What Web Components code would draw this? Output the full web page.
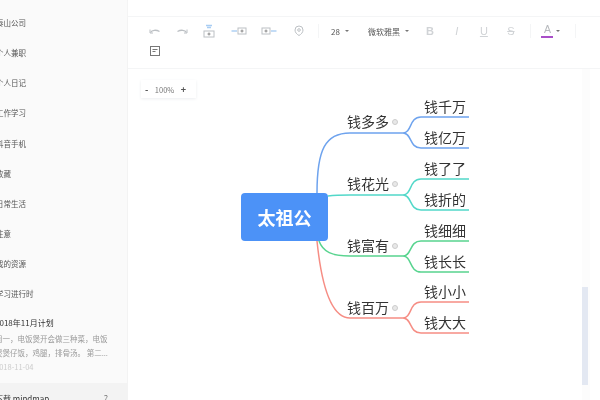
<!DOCTYPE html>
<html lang="zh"><head><meta charset="utf-8"><title>mindmap</title>
<style>
html,body{margin:0;padding:0;width:600px;height:400px;overflow:hidden;background:#fff;font-family:"Microsoft YaHei","Noto Sans CJK SC",sans-serif}
app-shell{width:600px;height:400px}
</style></head><body>
<app-shell>
  <side-bar slot="side">
    <side-row>泰山公司</side-row><side-row>个人兼职</side-row><side-row>个人日记</side-row><side-row>工作学习</side-row><side-row>抖音手机</side-row><side-row>收藏</side-row><side-row>日常生活</side-row><side-row>注意</side-row><side-row>我的资源</side-row><side-row>学习进行时</side-row>
    <note-card title-text="2018年11月计划" date="2018-11-04">周一，电饭煲开会做三种菜，电饭煲煲仔饭，鸡腿，排骨汤。 第二...</note-card>
    <side-foot>下载 mindmap</side-foot>
  </side-bar>
  <edit-toolbar slot="toolbar"></edit-toolbar>
  <mind-canvas slot="canvas"></mind-canvas>
</app-shell>
<script>
const def=(n,css,html)=>{customElements.define(n,class extends HTMLElement{constructor(){super();this.attachShadow({mode:'open'}).innerHTML=`<style>${css}</style>${typeof html==='function'?html(this):html}`;}})};

def('app-shell',`:host{display:grid;grid-template-columns:128px 1fr;grid-template-rows:17px 52px 1fr;overflow:hidden}
 .side{grid-row:1/4;min-width:0;overflow:hidden}
 .top{border-bottom:1px solid #f4f5f6;box-shadow:0 1px 1px #fafafa}
 .tb{min-width:0}.cv{min-width:0;min-height:0}`,
 `<div class="side"><slot name="side"></slot></div><div class="top"></div><div class="tb"><slot name="toolbar"></slot></div><div class="cv"><slot name="canvas"></slot></div>`);

def('side-bar',`:host{display:flex;flex-direction:column;height:400px;box-sizing:border-box;padding-top:8px;background:#fafafa;border-right:1px solid #f3f3f3;overflow:hidden}`,`<slot></slot>`);

def('side-row',`:host{display:block;flex:none;height:30.15px;line-height:30.15px;margin-left:-4px;font-size:7.5px;color:#555;white-space:nowrap;filter:blur(.3px)}`,`<slot></slot>`);

def('note-card',`:host{display:block;flex:none;margin-left:-5px;height:73.5px;width:118px;overflow:hidden;filter:blur(.3px)}
 .t{font-size:8px;line-height:15px;color:#333;height:15px;margin-top:6px;white-space:nowrap}
 .p{font-size:7.5px;line-height:14px;color:#9a9a9a;height:28px;overflow:hidden;margin-top:1.5px}
 .d{font-size:7.5px;line-height:15px;color:#ccc;margin-top:-.5px}`,
 h=>`<div class="t">${h.getAttribute('title-text')}</div><div class="p"><slot></slot></div><div class="d">${h.getAttribute('date')}</div>`);

def('side-foot',`:host{display:flex;flex:1;align-items:flex-start;justify-content:space-between;margin-left:-5px;padding:6px 19px 0 0;background:#f3f3f3;font-size:8px;line-height:20px;color:#333;white-space:nowrap;filter:blur(.3px)}
 span{color:#777;font-size:9px}`,`<div><slot></slot></div><span>?</span>`);

const ic=d=>`<svg width="16" height="16" viewBox="0 0 16 16" fill="none" stroke="#bcc0c4" stroke-width="1">${d}</svg>`;
const icons={
 undo:`<path d="M3.500 9.500c1.500-2.500 5.500-3 9-1" stroke-width="1.300"/><path d="M3 6.500v3.500h3"/>`,
 redo:`<path d="M12.500 9.500c-1.500-2.500-5.500-3-9-1" stroke-width="1.300"/><path d="M13 6.500v3.500h-3"/>`,
 parent:`<path d="M5 2.500h6M6 4.500h4" stroke="#a9cdf3" stroke-width="1.400"/><rect x="3" y="8" width="10" height="6"/><path d="M6.500 11h3M8 9.500v3" stroke="#888"/>`,
 left:`<path d="M0.500 8h5.500" stroke="#a9cdf3" stroke-width="1.400"/><rect x="7" y="5" width="8" height="6"/><path d="M9.500 8h3M11 6.500v3" stroke="#888"/>`,
 right:`<rect x="1" y="5" width="8" height="6"/><path d="M3.500 8h3M5 6.500v3" stroke="#888"/><path d="M10 8h5.500" stroke="#a9cdf3" stroke-width="1.400"/>`,
 pin:`<path d="M8 12.500c-2.200-1.300-4-3-4-5.500a4 4 0 0 1 8 0C12 9.500 10.200 11.200 8 12.500z"/><circle cx="8" cy="7" r="1.300"/>`
};
def('tool-icon',`:host{display:flex;flex:none;height:20px;align-items:center;justify-content:center;filter:blur(.25px)}`,h=>`<style>:host{width:${h.getAttribute('w')||30}px}</style>`+ic(icons[h.getAttribute('name')]));
def('tool-drop',`:host{display:flex;flex:none;align-items:center;gap:5px;height:20px;font-size:8px;color:#555;white-space:nowrap;filter:blur(.25px)}
 i{width:0;height:0;border:2px solid transparent;border-top:2.500px solid #777;border-bottom:0}`,`<slot></slot><i></i>`);
def('tool-fmt',`:host{display:flex;flex:none;width:27px;height:20px;align-items:center;justify-content:center;font:11px "Liberation Sans",sans-serif;color:#d0d3d6;filter:blur(.25px)}`,`<slot></slot>`);

def('edit-toolbar',`:host{display:block;height:52px;box-sizing:border-box;padding:4px 0 0 13.5px;border-bottom:1px solid #f4f5f6;background:#fff}
 .r{display:flex;align-items:center;height:20px}
 .sep{flex:none;width:1px;height:14px;background:#f4f5f6}
 .sp{flex:none}
 .a{display:flex;flex-direction:column;align-items:center;width:16px;filter:blur(.25px)}
 .a b{font:10.500px/11px "Liberation Sans",sans-serif;color:#b5b8bc;height:11px}
 .a u{display:block;width:12px;height:1.500px;background:#a94fc8;margin-top:1px}
 .n{width:27px;height:20px;display:flex;align-items:center;justify-content:center;filter:blur(.25px)}`,
 `<div class="r">
   <tool-icon w="27" name="undo"></tool-icon><tool-icon w="27" name="redo"></tool-icon><tool-icon w="27" name="parent"></tool-icon>
   <div class="sp" style="width:1.500px"></div>
   <tool-icon name="left"></tool-icon><tool-icon name="right"></tool-icon><tool-icon name="pin"></tool-icon>
   <div class="sep" style="margin:0 12px 0 4px"></div>
   <tool-drop>28</tool-drop><div class="sp" style="width:19px"></div>
   <tool-drop>微软雅黑</tool-drop><div class="sp" style="width:7.500px"></div>
   <tool-fmt><b style="font-weight:700">B</b></tool-fmt><tool-fmt><i>I</i></tool-fmt><tool-fmt><u>U</u></tool-fmt><tool-fmt><s>S</s></tool-fmt>
   <div class="sep" style="margin:0 8.500px 0 5.500px"></div>
   <div class="a"><b>A</b><u></u></div>
   <i style="flex:none;margin-left:1px;width:0;height:0;border:2px solid transparent;border-top:2.500px solid #777;border-bottom:0"></i>
   <div class="sep" style="margin-left:15px"></div>
 </div>
 <div class="r"><div class="n"><svg width="16" height="16" viewBox="0 0 16 16" fill="none" stroke="#777"><rect x="3.500" y="3.500" width="9" height="9"/><path d="M5.500 6.500h5M5.500 8.500h3" stroke-width="1.200"/></svg></div></div>`);

def('zoom-box',`:host{display:flex;align-items:center;justify-content:space-between;box-sizing:border-box;width:55px;height:18px;padding:0 10px 0 4px;background:#fff;box-shadow:0 1px 3px #eceef0;font:7.500px "Noto Sans CJK SC","Liberation Sans",sans-serif;color:#777;filter:blur(.25px)}
 b{color:#555;font-size:9px}`,`<b>-</b><span>100%</span><b>+</b>`);

def('map-node',`:host{position:absolute;transform:translateY(calc(-50% - 1px));line-height:20px;font-size:14px;color:#333;white-space:nowrap;display:flex;align-items:center;gap:3px;filter:blur(.25px)}
 i{width:4px;height:4px;border:1.500px solid #ccc;background:#e8e8e8;border-radius:50%;box-sizing:content-box;margin-top:2px}`,
 h=>`<slot></slot>${h.hasAttribute('dot')?'<i></i>':''}`);

const branch=(c,rootPath,y,a,b)=>`<g stroke="${c}"><path d="${rootPath}"/><path d="M403 ${y}C412 ${y} 409 ${a} 421 ${a}H469M403 ${y}C412 ${y} 409 ${b} 421 ${b}H469"/></g>`;
const groups=[
 ['#6ea3ee','M317 193C317 150 325 133 350 133H403',133,117,148,122,'钱多多',[[107,'钱千万'],[138,'钱亿万']]],
 ['#52d8c9','M328 196C336 195 340 195 350 195H403',195,179,210,184,'钱花光',[[169,'钱了了'],[200,'钱折的']]],
 ['#58d48f','M319 241C323 252 332 256 350 256H403',256,241,272,246,'钱富有',[[231,'钱细细'],[262,'钱长长']]],
 ['#f68d84','M317 241C322 290 332 318 350 318H403',318,302,333,308,'钱百万',[[292,'钱小小'],[323,'钱大大']]]
];
def('mind-canvas',`:host{display:block;position:relative;height:331px;overflow:hidden;background:#fff}
 .z{position:absolute;left:13px;top:11px}
 svg{position:absolute;left:-128px;top:-69px}
 .root{position:absolute;left:113px;top:124px;width:87px;height:48px;display:flex;align-items:center;justify-content:center;border-radius:4px;background:#4c92f7;color:#fff;font-size:18px;font-weight:700;filter:blur(.25px)}
 .track{position:absolute;left:454px;top:0;bottom:0;width:8px;background:#fcfcfc}
 .thumb{position:absolute;left:454px;top:218px;width:6px;height:98px;background:#e3e8f2}`,
 ()=>`<svg width="600" height="400" fill="none" stroke-width="1.500">${groups.map(g=>branch(g[0],g[1],g[2],g[3],g[4])).join('')}</svg>
  <zoom-box class="z"></zoom-box>
  <div class="root">太祖公</div>
  ${groups.map(g=>`<map-node dot style="left:${347-128}px;top:${g[5]-69}px">${g[6]}</map-node>`+g[7].map(k=>`<map-node style="left:${424-128}px;top:${k[0]-69}px">${k[1]}</map-node>`).join('')).join('')}
  <div class="track"></div><div class="thumb"></div>`);
</script>
</body></html>
